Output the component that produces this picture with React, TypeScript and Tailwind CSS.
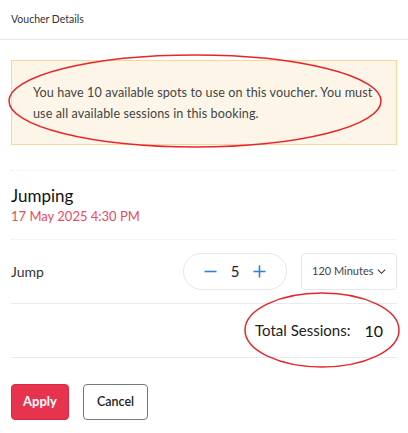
export default function App() {
  return (
    <div className="relative w-[408px] h-[433px] bg-white overflow-hidden font-['Lato',sans-serif] text-[#333]">
      <div className="h-[40px] border-b border-[#e6e8f0] px-[11px] flex items-center">
        <span className="text-[10.5px] text-[#333]">Voucher Details</span>
      </div>

      <div className="px-[11px]">
        <div className="mt-[20px] h-[85px] bg-[#fdf6e8] border border-[#fbd49a] pl-[21px] pr-[12px] flex items-center">
          <p className="text-[12.6px] leading-[21px] text-[#444] tracking-[0.1px]">
            You have 10 available spots to use on this voucher. You must use all available sessions in this booking.
          </p>
        </div>

        <div className="mt-[25px] border-t border-[#e8eaf0] pt-[14px] pb-[14px] border-b border-dotted">
          <div className="text-[17px] leading-[22px] text-[#111]">Jumping</div>
          <div className="text-[13px] leading-[18px] text-[#ea4a5e]">17 May 2025 4:30 PM</div>
        </div>

        <div className="h-[64px] flex items-center border-b border-[#e8eaf0]">
          <span className="text-[14px] text-[#333] flex-1">Jump</span>
          <div className="w-[104px] h-[37px] rounded-full border border-[#e3e6f0] flex items-center justify-between px-[20px]">
            <svg width="13" height="13" viewBox="0 0 13 13" stroke="#2b7fe0" strokeWidth="1.6">
              <path d="M0.5 6.5h12" />
            </svg>
            <span className="text-[15px] text-[#222]">5</span>
            <svg width="13" height="13" viewBox="0 0 13 13" stroke="#2b7fe0" strokeWidth="1.6">
              <path d="M0.5 6.5h12M6.5 0.5v12" />
            </svg>
          </div>
          <div className="ml-[14px] w-[96px] h-[37px] rounded border border-[#e3e6f0] flex items-center justify-between pl-[10px] pr-[9px]">
            <span className="text-[11px] text-[#444] whitespace-nowrap">120 Minutes</span>
            <svg width="11" height="11" viewBox="0 0 12 12" fill="none" stroke="#333" strokeWidth="1.2">
              <path d="M2 4l4 4 4-4" />
            </svg>
          </div>
        </div>

        <div className="h-[54px] flex items-center justify-end border-b border-[#e8eaf0] pr-[14px]">
          <span className="text-[15px] text-[#222]">Total Sessions:</span>
          <span className="ml-[14px] text-[16px] text-[#111]">10</span>
        </div>

        <div className="mt-[26px] flex gap-[14px]">
          <button className="w-[58px] h-[36px] rounded bg-[#e8334f] border border-[#d42a45] text-white text-[13px] font-bold">Apply</button>
          <button className="w-[65px] h-[36px] rounded border border-[#777] bg-white text-[#222] text-[12.5px] font-semibold">Cancel</button>
        </div>
      </div>

      <svg className="absolute inset-0 pointer-events-none" width="408" height="433">
        <ellipse cx="195" cy="101" rx="186" ry="46" fill="none" stroke="#e8262a" strokeWidth="1.5" />
        <ellipse cx="322" cy="330" rx="77" ry="37" fill="none" stroke="#e8262a" strokeWidth="1.5" />
      </svg>
    </div>
  );
}
